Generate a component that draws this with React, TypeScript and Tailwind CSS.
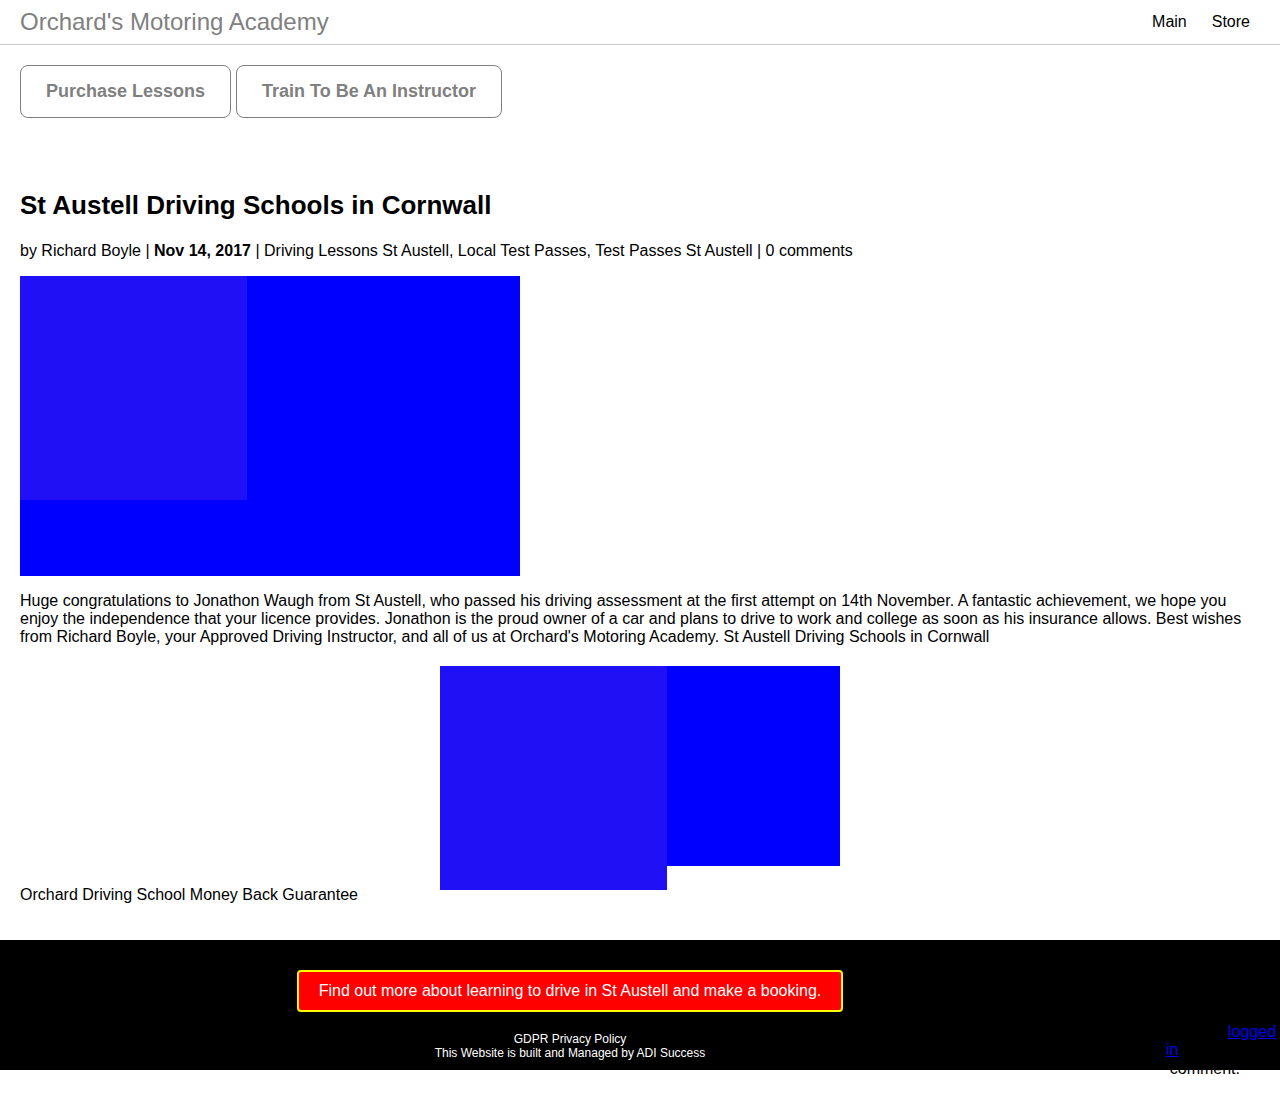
import React from "react";

const font = { fontFamily: '"Liberation Sans", Arial, sans-serif' };

function BlueImage({ w, h }: { w: string; h: string }) {
  // placeholder picture: blue block with a lighter square over its corner
  return (
    <div className={`relative bg-[#0000ff] ${w} ${h}`}>
      <div className="absolute left-0 top-0 h-[224px] w-[227px] bg-[#1f10f5]" />
    </div>
  );
}

export default function App() {
  return (
    <div className="bg-white text-black" style={font}>
      <header className="flex h-[45px] items-center justify-between border-b border-[#cccccc] pl-5 pr-[30px]">
        <div className="text-[24px] leading-[28px] text-[#808080]">Orchard's Motoring Academy</div>
        <nav className="flex gap-[25px] text-[16px]">
          <a>Main</a>
          <a>Store</a>
        </nav>
      </header>

      <main className="px-5">
        <div className="flex gap-[5px] pt-5">
          <button className="h-[53px] w-[211px] rounded-[8px] border border-[#808080] text-[18px] font-bold text-[#808080]">
            Purchase Lessons
          </button>
          <button className="h-[53px] w-[266px] rounded-[8px] border border-[#808080] text-[18px] font-bold text-[#808080]">
            Train To Be An Instructor
          </button>
        </div>

        <h1 className="mt-[72px] text-[26px] font-bold leading-[30px]">St Austell Driving Schools in Cornwall</h1>
        <p className="mt-[22px] text-[16px] leading-[18px]">
          by Richard Boyle | <b>Nov 14, 2017</b> | Driving Lessons St Austell, Local Test Passes, Test Passes St Austell | 0 comments
        </p>

        <div className="mt-[16px]">
          <BlueImage w="w-[500px]" h="h-[300px]" />
        </div>

        <p className="mt-[16px] text-[16px] leading-[18px]">
          Huge congratulations to Jonathon Waugh from St Austell, who passed his driving assessment at the first attempt on 14th November. A fantastic achievement, we hope you enjoy the independence that your licence provides. Jonathon is the proud owner of a car and plans to drive to work and college as soon as his insurance allows. Best wishes from Richard Boyle, your Approved Driving Instructor, and all of us at Orchard's Motoring Academy. St Austell Driving Schools in Cornwall
        </p>

        <div className="mt-[20px] flex justify-center">
          <BlueImage w="w-[400px]" h="h-[200px]" />
        </div>
        <p className="mt-[20px] text-[16px] leading-[18px]">Orchard Driving School Money Back Guarantee</p>
      </main>

      <footer className="relative z-10 mt-[36px] flex h-[130px] bg-black">
        <div className="flex w-[1140px] flex-col items-center pt-[30px]">
          <a className="flex h-[42px] w-[546px] items-center justify-center rounded-[4px] border-2 border-[#ffff00] bg-[#ff0000] text-[16px] text-white">
            Find out more about learning to drive in St Austell and make a booking.
          </a>
          <div className="mt-5 text-center text-[12px] leading-[14px] text-white">
            <div>GDPR Privacy Policy</div>
            <div>This Website is built and Managed by ADI Success</div>
          </div>
        </div>
        <div className="relative flex-1 text-[16px] leading-[18px]">
          <a className="absolute left-[88px] top-[83px] text-[#0000ee] underline">logged</a>
          <a className="absolute left-[26px] top-[101px] text-[#0000ee] underline">in</a>
        </div>
      </footer>
      <div className="relative z-0 -mt-[10px] flex h-[34px] justify-end pr-[40px] text-[16px] leading-[18px]">
        <span>comment.</span>
      </div>
    </div>
  );
}
